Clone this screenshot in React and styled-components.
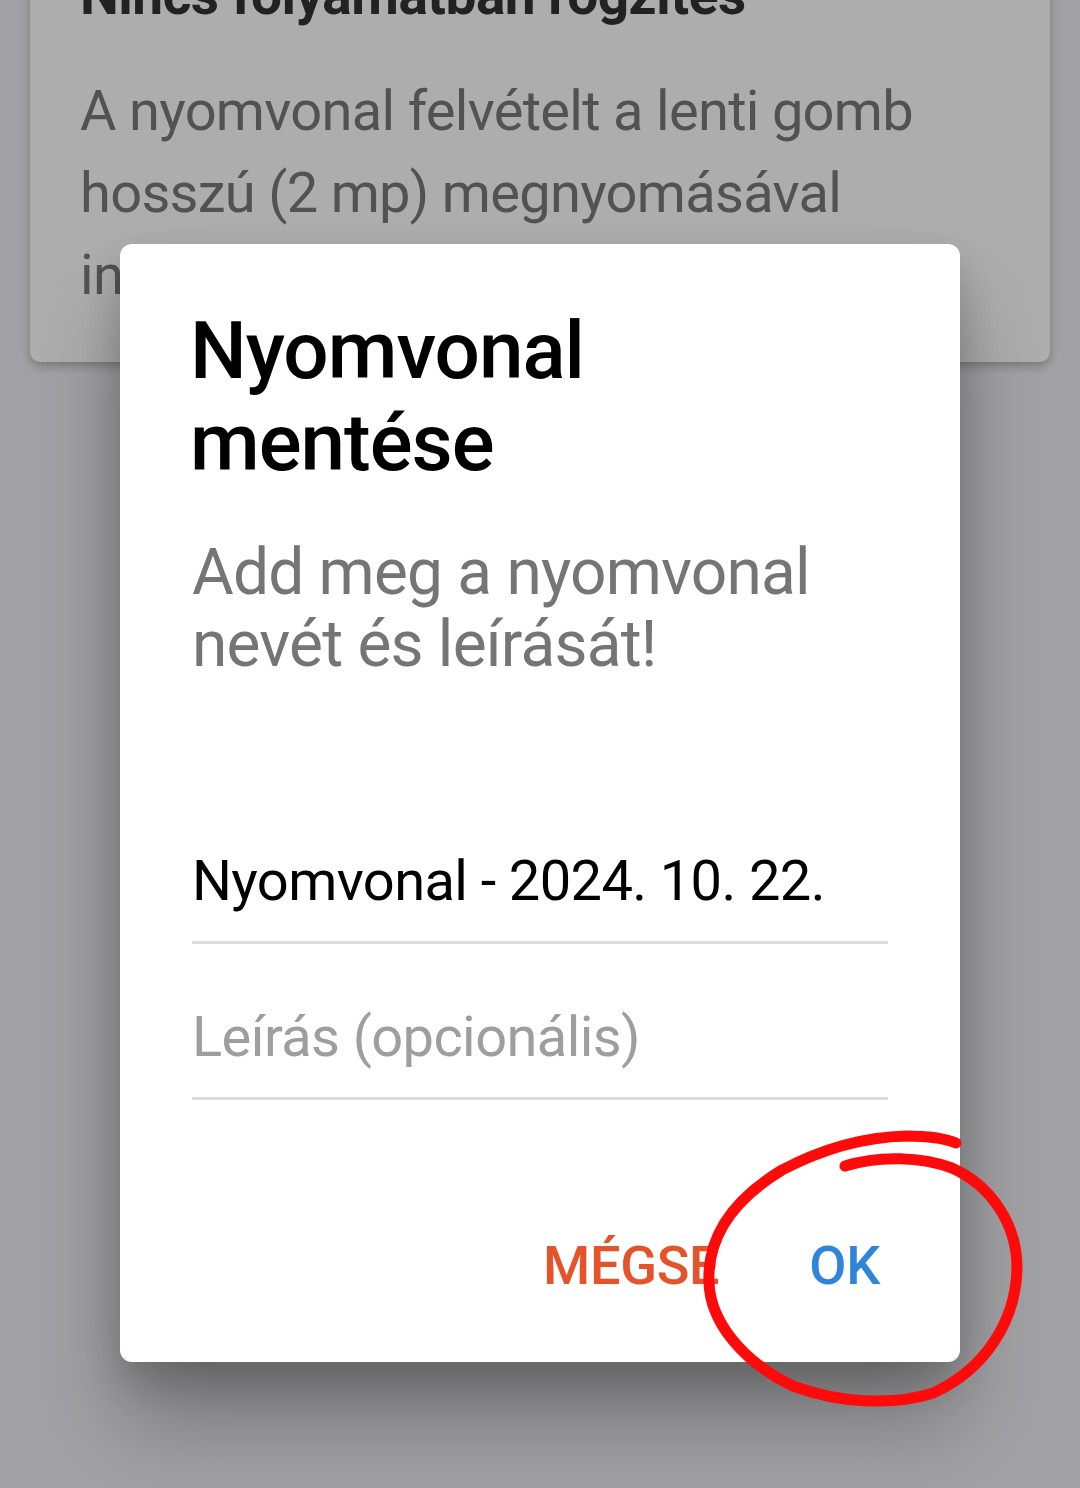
import React from 'react';
import styled, { createGlobalStyle } from 'styled-components';

const GlobalStyle = createGlobalStyle`
  html, body {
    margin: 0;
    padding: 0;
    background: #eeeef3;
    font-family: Roboto, "Noto Sans", "Liberation Sans", sans-serif;
    overflow: hidden;
  }
`;

const Page = styled.div`
  width: 1080px;
  height: 1488px;
  padding: 0 30px;
  box-sizing: border-box;
`;

const StatusCard = styled.div`
  margin-top: -38px;
  background: #ffffff;
  border-radius: 10px;
  padding: 0 50px 46px;
  box-shadow: 0 4px 10px rgba(0, 0, 0, 0.25);
`;

const CardTitle = styled.div`
  font-size: 55px;
  font-weight: 700;
  color: #333;
  line-height: 66px;
  letter-spacing: -0.5px;
  white-space: nowrap;
`;

const CardText = styled.p`
  margin: 42px 0 0;
  font-size: 56px;
  line-height: 82px;
  color: #7a7a7a;
  letter-spacing: -0.7px;
`;

const Scrim = styled.div`
  position: fixed;
  inset: 0;
  background: rgba(0, 0, 0, 0.32);
  display: flex;
  justify-content: center;
  align-items: flex-start;
  padding-top: 244px;
`;

const Dialog = styled.div`
  position: relative;
  width: 840px;
  height: 1118px;
  box-sizing: border-box;
  background: #fff;
  border-radius: 12px;
  padding: 61px 72px 0 70px;
  box-shadow: 0 60px 90px rgba(0, 0, 0, 0.28), 0 20px 40px rgba(0, 0, 0, 0.18);
  display: flex;
  flex-direction: column;
`;

const Title = styled.h2`
  margin: 0;
  font-size: 80px;
  font-weight: 500;
  line-height: 92px;
  color: #000;
  letter-spacing: -1px;
`;

const Message = styled.p`
  margin: 48px 0 0 2px;
  font-size: 64px;
  line-height: 72px;
  color: #757575;
  letter-spacing: -0.8px;
`;

const Field = styled.div`
  margin-top: ${p => p.$top}px;
  margin-left: 2px;
  border-bottom: 3px solid #dcdcdc;
  padding-bottom: 27px;
  font-size: 56px;
  line-height: 66px;
  letter-spacing: -0.6px;
  color: ${p => (p.$placeholder ? '#9e9e9e' : '#000')};
`;

const Actions = styled.div`
  margin-top: auto;
  margin-bottom: 66px;
  display: flex;
  justify-content: flex-end;
  gap: 90px;
  padding-right: 8px;
`;

const ActionButton = styled.button`
  border: 0;
  background: none;
  padding: 0;
  font-family: inherit;
  font-size: 54px;
  font-weight: 500;
  line-height: 60px;
  letter-spacing: -0.3px;
  color: ${p => p.$color};
  cursor: pointer;
`;

const Scribble = styled.svg`
  position: absolute;
  left: 0;
  top: 0;
  width: 1080px;
  height: 1488px;
  pointer-events: none;
`;

export default function App() {
  return (
    <>
      <GlobalStyle />
      <Page>
        <StatusCard>
          <CardTitle>Nincs folyamatban rögzítés</CardTitle>
          <CardText>
            A nyomvonal felvételt a lenti gomb hosszú (2 mp) megnyomásával indíthatod el.
          </CardText>
        </StatusCard>
      </Page>
      <Scrim>
        <Dialog>
          <Title>Nyomvonal<br />mentése</Title>
          <Message>Add meg a nyomvonal nevét és leírását!</Message>
          <Field $top={167}>Nyomvonal - 2024. 10. 22.</Field>
          <Field $top={60} $placeholder>Leírás (opcionális)</Field>
          <Actions>
            <ActionButton $color="#e5532a">MÉGSE</ActionButton>
            <ActionButton $color="#2f86d9">OK</ActionButton>
          </Actions>
        </Dialog>
      </Scrim>
      <Scribble viewBox="0 0 1080 1488">
        <path
          d="M845 1166 C 880 1155, 922 1157, 952 1168 C 992 1186, 1017 1225, 1017 1268 C 1016 1322, 984 1370, 933 1393 C 893 1406, 838 1403, 793 1386 C 743 1362, 710 1322, 709 1282 C 707 1234, 736 1198, 782 1170 C 822 1149, 866 1137, 906 1136 C 926 1136, 944 1138, 956 1143"
          fill="none"
          stroke="#ff0a0a"
          strokeWidth="11"
          strokeLinecap="round"
        />
      </Scribble>
    </>
  );
}
